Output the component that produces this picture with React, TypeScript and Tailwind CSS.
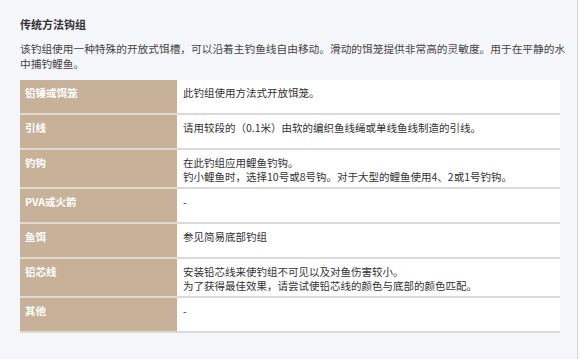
import React from 'react';

interface Row {
  label: string;
  lines: string[];
}

const rows: Row[] = [
  { label: '铅锤或饵笼', lines: ['此钓组使用方法式开放饵笼。'] },
  { label: '引线', lines: ['请用较段的（0.1米）由软的编织鱼线绳或单线鱼线制造的引线。'] },
  {
    label: '钓钩',
    lines: ['在此钓组应用鲤鱼钓钩。', '钓小鲤鱼时，选择10号或8号钩。对于大型的鲤鱼使用4、2或1号钓钩。'],
  },
  { label: 'PVA或火箭', lines: ['-'] },
  { label: '鱼饵', lines: ['参见简易底部钓组'] },
  {
    label: '铅芯线',
    lines: ['安装铅芯线来使钓组不可见以及对鱼伤害较小。', '为了获得最佳效果，请尝试使铅芯线的颜色与底部的颜色匹配。'],
  },
  { label: '其他', lines: ['-'] },
];

const font = { fontFamily: '"Noto Sans CJK SC", "Noto Sans", sans-serif' };

const App: React.FC = () => {
  return (
    <div className="flex h-[359px] w-[580px] overflow-hidden bg-[#f5f6fa]" style={font}>
      <main className="w-[577px] shrink-0 pl-[20px] pr-[17px] pt-[17px]">
        <h2 className="text-[11px] font-bold leading-[15px] text-[#333]">传统方法钩组</h2>
        <p className="mt-[9px] w-[550px] whitespace-nowrap text-[10.7px] leading-[15px] text-[#444]">
          该钓组使用一种特殊的开放式饵槽，可以沿着主钓鱼线自由移动。滑动的饵笼提供非常高的灵敏度。用于在平静的水
          <br />
          中捕钓鲤鱼。
        </p>

        {/* Rig table */}
        <div className="mt-[9px] grid grid-cols-[157px_1fr] text-[10.5px] leading-[14px]">
          {rows.map((row) => (
            <React.Fragment key={row.label}>
              <div className="min-h-[35px] border-b-2 border-[#e3d9cc] bg-[#c7b299] pl-[5px] pt-[6px] pb-[3px] font-bold text-white">
                {row.label}
              </div>
              <div className="min-h-[35px] border-b-2 border-[#dadada] bg-white pl-[6px] pt-[6px] pb-[3px] text-[#333]">
                {row.lines.map((l, i) => (
                  <div key={i}>{l}</div>
                ))}
              </div>
            </React.Fragment>
          ))}
        </div>
      </main>
      <aside className="flex-1 border-l border-[#d3d6de] bg-[#fafbfd]" />
    </div>
  );
};

export default App;
